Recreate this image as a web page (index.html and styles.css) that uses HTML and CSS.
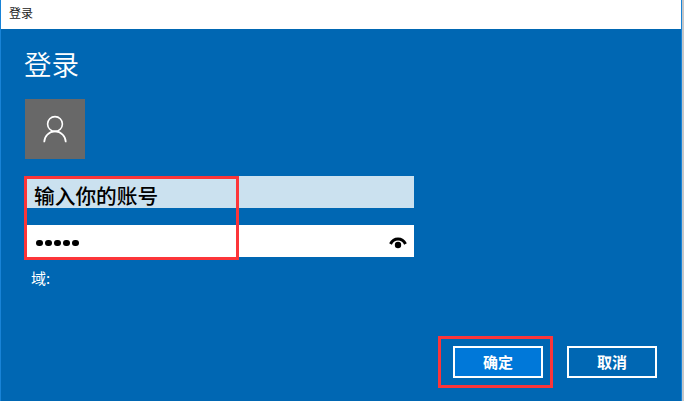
FILE: index.html
```html
<!DOCTYPE html>
<html lang="zh-CN">
<head>
<meta charset="utf-8">
<title>登录</title>
<link rel="stylesheet" href="styles.css">
</head>
<body>
<main class="dialog">
  <header class="titlebar">登录</header>
  <section class="content">
    <h1 class="heading">登录</h1>
    <div class="avatar">
      <svg width="60" height="60" viewBox="0 0 60 60" fill="none" stroke="#fff" stroke-width="1.6">
        <circle cx="30" cy="25" r="7.4"/>
        <path d="M19.2 43.2a10.8 10.8 0 0 1 21.6 0"/>
      </svg>
    </div>
    <div class="fields">
      <div class="field account"><span>输入你的账号</span></div>
      <div class="field password">
        <span class="dots"><i></i><i></i><i></i><i></i><i></i></span>
        <svg class="eye" width="18" height="14" viewBox="0 0 18 14">
          <path d="M1.500 8C3.200 4.600 5.800 3 9 3s5.800 1.600 7.500 5" fill="none" stroke="#000" stroke-width="3"/>
          <circle cx="9" cy="9" r="3.200"/>
        </svg>
      </div>
      <div class="highlight"></div>
    </div>
    <div class="domain">域:</div>
    <footer class="actions">
      <div class="confirm"><button class="button primary">确定</button></div>
      <button class="button">取消</button>
    </footer>
  </section>
</main>
</body>
</html>
```
FILE: styles.css
```css
* { box-sizing: border-box; }

body {
  margin: 0;
  width: 684px;
  height: 401px;
  overflow: hidden;
  background: #c4c6c8;
  font-family: "Noto Sans CJK SC", sans-serif;
}

.dialog {
  width: 682px;
  height: 401px;
  border: solid #1883d7;
  border-width: 0 1px;
  background: #0067b3;
}

.titlebar {
  height: 29px;
  padding-left: 8px;
  background: #fff;
  color: #222;
  font-size: 12px;
  line-height: 26px;
}

.content {
  display: flex;
  flex-direction: column;
  height: 372px;
  padding: 15px 24px 13px;
  color: #fff;
}

.heading {
  margin: 0 0 0 -1px;
  height: 55px;
  font-size: 27.5px;
  font-weight: 350;
  line-height: 39px;
}

.avatar {
  width: 60px;
  height: 60px;
  background: #686868;
}

.avatar svg { display: block; }

.fields {
  position: relative;
  display: flex;
  flex-direction: column;
  gap: 17px;
  width: 389px;
  margin-top: 17px;
}

.field {
  display: flex;
  align-items: center;
  height: 32px;
  background: #fff;
  color: #000;
}

.account {
  padding: 5px 0 0 9px;
  background: #cbe1ef;
  font-size: 20.7px;
  font-weight: 500;
  line-height: 32px;
}

.password {
  justify-content: space-between;
  padding: 4px 7px 0 11px;
}

.dots {
  display: flex;
  gap: 2.4px;
}

.dots i {
  width: 6.7px;
  height: 6.7px;
  border-radius: 50%;
  background: #000;
}

.highlight {
  position: absolute;
  top: 0;
  left: -1px;
  width: 215px;
  height: 84px;
  border: 3px solid #fc3539;
}

.domain {
  margin: 10px 0 0 6px;
  font-size: 15px;
  line-height: 22px;
}

.actions {
  display: flex;
  align-items: center;
  justify-content: flex-end;
  gap: 14px;
  margin-top: auto;
}

.confirm {
  display: flex;
  padding: 7px 7px 7px 12px;
  border: 3px solid #fc3539;
}

.button {
  width: 90px;
  height: 32px;
  padding: 0;
  border: 2px solid #fff;
  background: transparent;
  color: #fff;
  font: 700 15px/28px "Noto Sans CJK SC", sans-serif;
}

.primary { background: #0078d9; }
```
